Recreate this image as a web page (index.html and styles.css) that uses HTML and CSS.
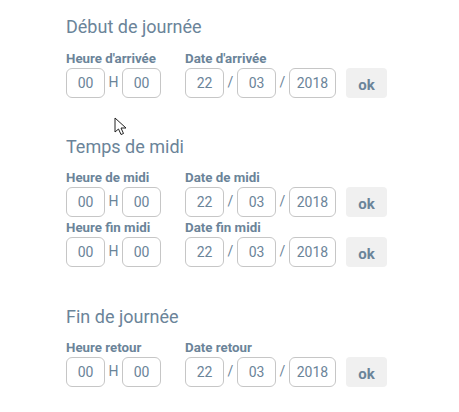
FILE: index.html
```html
<!DOCTYPE html>
<html lang="fr">
<head>
    <meta charset="UTF-8">
    <meta name="viewport" content="width=device-width, initial-scale=1.0">
    <title>Pointage</title>
    <link rel="stylesheet" href="styles.css">
</head>
<body>
    <div class="section section-debut">
        <h2>Début de journée</h2>
        <div class="row">
            <div class="time-col">
                <label>Heure d'arrivée</label>
                <div class="fields"><span class="box">00</span><span class="sep sep-h">H</span><span class="box">00</span></div>
            </div>
            <div class="date-col">
                <label>Date d'arrivée</label>
                <div class="fields"><span class="box">22</span><span class="sep">/</span><span class="box">03</span><span class="sep">/</span><span class="box year">2018</span></div>
            </div>
            <button class="ok">ok</button>
        </div>
    </div>

    <div class="section section-midi">
        <h2>Temps de midi</h2>
        <div class="row">
            <div class="time-col">
                <label>Heure de midi</label>
                <div class="fields"><span class="box">00</span><span class="sep sep-h">H</span><span class="box">00</span></div>
            </div>
            <div class="date-col">
                <label>Date de midi</label>
                <div class="fields"><span class="box">22</span><span class="sep">/</span><span class="box">03</span><span class="sep">/</span><span class="box year">2018</span></div>
            </div>
            <button class="ok">ok</button>
        </div>
        <div class="row">
            <div class="time-col">
                <label>Heure fin midi</label>
                <div class="fields"><span class="box">00</span><span class="sep sep-h">H</span><span class="box">00</span></div>
            </div>
            <div class="date-col">
                <label>Date fin midi</label>
                <div class="fields"><span class="box">22</span><span class="sep">/</span><span class="box">03</span><span class="sep">/</span><span class="box year">2018</span></div>
            </div>
            <button class="ok">ok</button>
        </div>
    </div>

    <div class="section">
        <h2>Fin de journée</h2>
        <div class="row">
            <div class="time-col">
                <label>Heure retour</label>
                <div class="fields"><span class="box">00</span><span class="sep sep-h">H</span><span class="box">00</span></div>
            </div>
            <div class="date-col">
                <label>Date retour</label>
                <div class="fields"><span class="box">22</span><span class="sep">/</span><span class="box">03</span><span class="sep">/</span><span class="box year">2018</span></div>
            </div>
            <button class="ok">ok</button>
        </div>
    </div>

    <svg class="cursor" width="14" height="20" viewBox="0 0 14 20">
        <path d="M1 1 L1 15 L4.5 12 L7 17.5 L9.5 16.5 L7 11 L12 11 Z" fill="#fff" stroke="#222" stroke-width="1"/>
    </svg>
</body>
</html>
```

FILE: styles.css
```css
body {
    margin: 0;
    padding: 16px 0 0 66px;
    background: white;
    font-family: Roboto, sans-serif;
    color: #6b8499;
}
.section {
    margin-bottom: 38px;
}
.section-debut h2 {
    margin-bottom: 13px;
}
.section-midi {
    margin-bottom: 39px;
}
h2 {
    margin: 0 0 12px;
    font-size: 18px;
    line-height: 22px;
    font-weight: 400;
}
.row {
    display: flex;
    align-items: flex-end;
    margin-bottom: 3px;
}
.time-col {
    width: 119px;
}
.date-col {
    width: 161px;
}
label {
    display: block;
    height: 17px;
    font-size: 13.3px;
    line-height: 16px;
    font-weight: 700;
    white-space: nowrap;
}
.fields {
    display: flex;
}
.box {
    box-sizing: border-box;
    width: 39px;
    height: 30px;
    border: 1px solid #c6c6c6;
    border-radius: 6px;
    font-size: 14px;
    line-height: 28px;
    text-align: center;
}
.year {
    width: 47px;
}
.sep {
    width: 13px;
    font-size: 14px;
    line-height: 28px;
    text-align: center;
}
.sep-h {
    width: 17px;
}
.ok {
    width: 41px;
    height: 30px;
    padding: 3px 0 0;
    border: none;
    border-radius: 4px;
    background: #f0f0f0;
    color: #6b8499;
    font-family: Roboto, sans-serif;
    font-size: 15px;
    font-weight: 700;
}
.cursor {
    position: absolute;
    left: 114px;
    top: 117px;
}
```
